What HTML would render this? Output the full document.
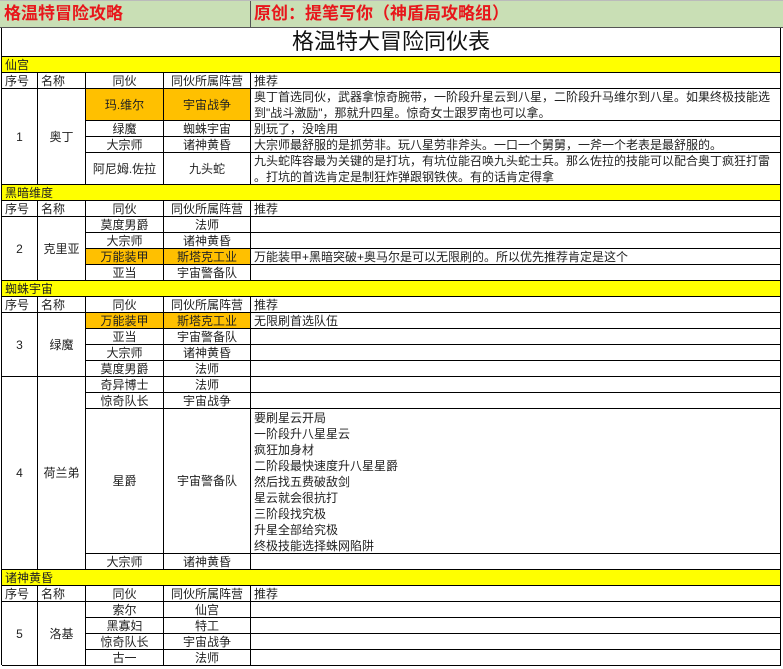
<!DOCTYPE html>
<html><head><meta charset="utf-8"><style>
*{margin:0;padding:0}
body{width:783px;height:669px;background:#fff;position:relative;overflow:hidden;font-family:"Liberation Sans","Noto Sans CJK SC",sans-serif;color:#222}
.c{position:absolute;box-sizing:border-box;border-right:1px solid #000;border-bottom:1px solid #000;font-size:12px;line-height:16px;display:flex;align-items:center;justify-content:center;overflow:hidden;white-space:nowrap}
.l{justify-content:flex-start;padding-left:3px}
.w{white-space:normal;align-items:flex-start;line-height:16px}
.n{white-space:nowrap;display:block}
.y{background:#ffff00}
.o{background:#ffc000}
.g{background:#c9dfb5;font-weight:bold;color:#e8161b;font-size:17px;border-bottom:1px solid #555}
</style></head><body>
<div style="position:absolute;left:0;top:0;width:783px;height:1px;background:#bbb"></div>
<div class="c g l" style="left:0;top:1px;width:251px;height:27px;padding-left:4px;border-right:1px solid #555">格温特冒险攻略</div>
<div class="c g l" style="left:251px;top:1px;width:532px;height:27px;padding-left:3px;border-right:none">原创：提笔写你（神盾局攻略组）</div>
<div style="position:absolute;left:1px;top:28px;width:1px;height:637px;background:#000"></div>
<div class="c" style="left:2px;top:28px;width:779px;height:29px;font-size:22px;color:#111">格温特大冒险同伙表</div>

<!-- section 1 -->
<div class="c y l" style="left:2px;top:57px;width:779px;height:16px">仙宫</div>
<div class="c l" style="left:2px;top:73px;width:36px;height:16px">序号</div>
<div class="c l" style="left:38px;top:73px;width:48px;height:16px">名称</div>
<div class="c" style="left:86px;top:73px;width:78px;height:16px">同伙</div>
<div class="c" style="left:164px;top:73px;width:87px;height:16px">同伙所属阵营</div>
<div class="c l" style="left:251px;top:73px;width:530px;height:16px">推荐</div>
<div class="c" style="left:2px;top:89px;width:36px;height:96px">1</div>
<div class="c" style="left:38px;top:89px;width:48px;height:96px">奥丁</div>
<div class="c o" style="left:86px;top:89px;width:78px;height:32px">玛.维尔</div>
<div class="c o" style="left:164px;top:89px;width:87px;height:32px">宇宙战争</div>
<div class="c l w" style="left:251px;top:89px;width:530px;height:32px"><span class="n">奥丁首选同伙，武器拿惊奇腕带，一阶段升星云到八星，二阶段升马维尔到八星。如果终极技能选<br>到"战斗激励"，那就升四星。惊奇女士跟罗南也可以拿。</span></div>
<div class="c" style="left:86px;top:121px;width:78px;height:16px">绿魔</div>
<div class="c" style="left:164px;top:121px;width:87px;height:16px">蜘蛛宇宙</div>
<div class="c l" style="left:251px;top:121px;width:530px;height:16px">别玩了，没啥用</div>
<div class="c" style="left:86px;top:137px;width:78px;height:16px">大宗师</div>
<div class="c" style="left:164px;top:137px;width:87px;height:16px">诸神黄昏</div>
<div class="c l" style="left:251px;top:137px;width:530px;height:16px">大宗师最舒服的是抓劳非。玩八星劳非斧头。一口一个舅舅，一斧一个老表是最舒服的。</div>
<div class="c" style="left:86px;top:153px;width:78px;height:32px">阿尼姆.佐拉</div>
<div class="c" style="left:164px;top:153px;width:87px;height:32px">九头蛇</div>
<div class="c l w" style="left:251px;top:153px;width:530px;height:32px"><span class="n">九头蛇阵容最为关键的是打坑，有坑位能召唤九头蛇士兵。那么佐拉的技能可以配合奥丁疯狂打雷<br>。打坑的首选肯定是制狂炸弹跟钢铁侠。有的话肯定得拿</span></div>

<!-- section 2 -->
<div class="c y l" style="left:2px;top:185px;width:779px;height:16px">黑暗维度</div>
<div class="c l" style="left:2px;top:201px;width:36px;height:16px">序号</div>
<div class="c l" style="left:38px;top:201px;width:48px;height:16px">名称</div>
<div class="c" style="left:86px;top:201px;width:78px;height:16px">同伙</div>
<div class="c" style="left:164px;top:201px;width:87px;height:16px">同伙所属阵营</div>
<div class="c l" style="left:251px;top:201px;width:530px;height:16px">推荐</div>
<div class="c" style="left:2px;top:217px;width:36px;height:64px">2</div>
<div class="c" style="left:38px;top:217px;width:48px;height:64px">克里亚</div>
<div class="c" style="left:86px;top:217px;width:78px;height:16px">莫度男爵</div>
<div class="c" style="left:164px;top:217px;width:87px;height:16px">法师</div>
<div class="c l" style="left:251px;top:217px;width:530px;height:16px"></div>
<div class="c" style="left:86px;top:233px;width:78px;height:16px">大宗师</div>
<div class="c" style="left:164px;top:233px;width:87px;height:16px">诸神黄昏</div>
<div class="c l" style="left:251px;top:233px;width:530px;height:16px"></div>
<div class="c o" style="left:86px;top:249px;width:78px;height:16px">万能装甲</div>
<div class="c o" style="left:164px;top:249px;width:87px;height:16px">斯塔克工业</div>
<div class="c l" style="left:251px;top:249px;width:530px;height:16px">万能装甲+黑暗突破+奥马尔是可以无限刷的。所以优先推荐肯定是这个</div>
<div class="c" style="left:86px;top:265px;width:78px;height:16px">亚当</div>
<div class="c" style="left:164px;top:265px;width:87px;height:16px">宇宙警备队</div>
<div class="c l" style="left:251px;top:265px;width:530px;height:16px"></div>

<!-- section 3 -->
<div class="c y l" style="left:2px;top:281px;width:779px;height:16px">蜘蛛宇宙</div>
<div class="c l" style="left:2px;top:297px;width:36px;height:16px">序号</div>
<div class="c l" style="left:38px;top:297px;width:48px;height:16px">名称</div>
<div class="c" style="left:86px;top:297px;width:78px;height:16px">同伙</div>
<div class="c" style="left:164px;top:297px;width:87px;height:16px">同伙所属阵营</div>
<div class="c l" style="left:251px;top:297px;width:530px;height:16px">推荐</div>
<div class="c" style="left:2px;top:313px;width:36px;height:64px">3</div>
<div class="c" style="left:38px;top:313px;width:48px;height:64px">绿魔</div>
<div class="c o" style="left:86px;top:313px;width:78px;height:16px">万能装甲</div>
<div class="c o" style="left:164px;top:313px;width:87px;height:16px">斯塔克工业</div>
<div class="c l" style="left:251px;top:313px;width:530px;height:16px">无限刷首选队伍</div>
<div class="c" style="left:86px;top:329px;width:78px;height:16px">亚当</div>
<div class="c" style="left:164px;top:329px;width:87px;height:16px">宇宙警备队</div>
<div class="c l" style="left:251px;top:329px;width:530px;height:16px"></div>
<div class="c" style="left:86px;top:345px;width:78px;height:16px">大宗师</div>
<div class="c" style="left:164px;top:345px;width:87px;height:16px">诸神黄昏</div>
<div class="c l" style="left:251px;top:345px;width:530px;height:16px"></div>
<div class="c" style="left:86px;top:361px;width:78px;height:16px">莫度男爵</div>
<div class="c" style="left:164px;top:361px;width:87px;height:16px">法师</div>
<div class="c l" style="left:251px;top:361px;width:530px;height:16px"></div>

<!-- row 4 -->
<div class="c" style="left:2px;top:377px;width:36px;height:193px">4</div>
<div class="c" style="left:38px;top:377px;width:48px;height:193px">荷兰弟</div>
<div class="c" style="left:86px;top:377px;width:78px;height:16px">奇异博士</div>
<div class="c" style="left:164px;top:377px;width:87px;height:16px">法师</div>
<div class="c l" style="left:251px;top:377px;width:530px;height:16px"></div>
<div class="c" style="left:86px;top:393px;width:78px;height:16px">惊奇队长</div>
<div class="c" style="left:164px;top:393px;width:87px;height:16px">宇宙战争</div>
<div class="c l" style="left:251px;top:393px;width:530px;height:16px"></div>
<div class="c" style="left:86px;top:409px;width:78px;height:145px">星爵</div>
<div class="c" style="left:164px;top:409px;width:87px;height:145px">宇宙警备队</div>
<div class="c l w" style="left:251px;top:409px;width:530px;height:145px;padding-top:1px">要刷星云开局<br>一阶段升八星星云<br>疯狂加身材<br>二阶段最快速度升八星星爵<br>然后找五费破敌剑<br>星云就会很抗打<br>三阶段找究极<br>升星全部给究极<br>终极技能选择蛛网陷阱</div>
<div class="c" style="left:86px;top:554px;width:78px;height:16px">大宗师</div>
<div class="c" style="left:164px;top:554px;width:87px;height:16px">诸神黄昏</div>
<div class="c l" style="left:251px;top:554px;width:530px;height:16px"></div>

<!-- section 5 -->
<div class="c y l" style="left:2px;top:570px;width:779px;height:16px">诸神黄昏</div>
<div class="c l" style="left:2px;top:586px;width:36px;height:16px">序号</div>
<div class="c l" style="left:38px;top:586px;width:48px;height:16px">名称</div>
<div class="c" style="left:86px;top:586px;width:78px;height:16px">同伙</div>
<div class="c" style="left:164px;top:586px;width:87px;height:16px">同伙所属阵营</div>
<div class="c l" style="left:251px;top:586px;width:530px;height:16px">推荐</div>
<div class="c" style="left:2px;top:602px;width:36px;height:64px">5</div>
<div class="c" style="left:38px;top:602px;width:48px;height:64px">洛基</div>
<div class="c" style="left:86px;top:602px;width:78px;height:16px">索尔</div>
<div class="c" style="left:164px;top:602px;width:87px;height:16px">仙宫</div>
<div class="c l" style="left:251px;top:602px;width:530px;height:16px"></div>
<div class="c" style="left:86px;top:618px;width:78px;height:16px">黑寡妇</div>
<div class="c" style="left:164px;top:618px;width:87px;height:16px">特工</div>
<div class="c l" style="left:251px;top:618px;width:530px;height:16px"></div>
<div class="c" style="left:86px;top:634px;width:78px;height:16px">惊奇队长</div>
<div class="c" style="left:164px;top:634px;width:87px;height:16px">宇宙战争</div>
<div class="c l" style="left:251px;top:634px;width:530px;height:16px"></div>
<div class="c" style="left:86px;top:650px;width:78px;height:16px">古一</div>
<div class="c" style="left:164px;top:650px;width:87px;height:16px">法师</div>
<div class="c l" style="left:251px;top:650px;width:530px;height:16px"></div>
</body></html>
